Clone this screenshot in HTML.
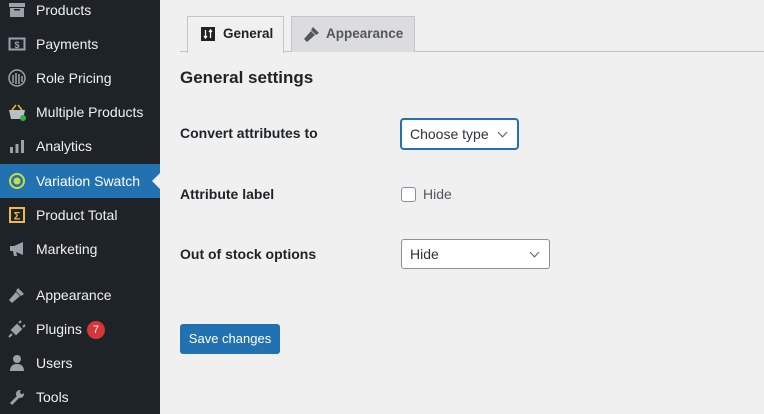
<!DOCTYPE html>
<html><head><style>
*{box-sizing:border-box;margin:0;padding:0}
body{width:764px;height:414px;overflow:hidden;background:#f0f0f1;font-family:"Liberation Sans",sans-serif;font-size:14px;color:#1d2327;position:relative}
#sb{position:absolute;left:0;top:0;width:160px;height:414px;background:#1d2327}
.mi{position:absolute;left:0;width:160px;height:34px;color:#f0f0f1;font-size:14px;line-height:34px;padding-left:36px}
.mi .ic{position:absolute;left:8px;top:8px;width:18px;height:18px}
.mi.cur{background:#2271b1;color:#fff}
.mi.cur:after{content:"";position:absolute;right:0;top:9px;border:8px solid transparent;border-right-color:#f0f0f1}
.badge{display:inline-block;background:#d63638;color:#fff;border-radius:9px;width:18px;height:18px;line-height:18px;text-align:center;font-size:11px;margin-left:5px;vertical-align:1px}
.tab{position:absolute;top:16px;height:36px;border:1px solid #c3c4c7;border-bottom:none;font-weight:bold;font-size:13.5px;line-height:34px;padding-left:40px}
.lbl{position:absolute;left:180px;font-weight:bold;font-size:14px}
.sel{position:absolute;left:401px;background:#fff;border:1px solid #8c8f94;border-radius:3px;height:30px;line-height:28px;padding-left:8px;font-size:14px;color:#2c3338}
.sel:after{content:"";position:absolute;right:11px;top:9px;width:6px;height:6px;border-right:1.6px solid #50575e;border-bottom:1.6px solid #50575e;transform:rotate(45deg)}
</style></head><body>
<div id="sb">
<div class="mi" style="top:-7px"><svg class="ic" viewBox="0 0 18 18"><rect x="1" y="2" width="16" height="4" fill="#9ca2a7"/><rect x="2" y="7" width="14" height="9" fill="#9ca2a7"/><rect x="6" y="8" width="6" height="1.5" fill="#1d2327"/></svg>Products</div>
<div class="mi" style="top:27px"><svg class="ic" viewBox="0 0 18 18"><rect x="1.5" y="3.5" width="15" height="11" fill="none" stroke="#9ca2a7" stroke-width="2"/><text x="9" y="13" font-size="9" fill="#9ca2a7" text-anchor="middle" font-weight="bold">$</text></svg>Payments</div>
<div class="mi" style="top:61px"><svg class="ic" viewBox="0 0 18 18"><circle cx="9" cy="9" r="8" fill="none" stroke="#9ca2a7" stroke-width="1.5"/><path d="M5 6v8M8 4v11M11 5v10M14 7v6" stroke="#9ca2a7" stroke-width="1.5"/></svg>Role Pricing</div>
<div class="mi" style="top:95px"><svg class="ic" viewBox="0 0 18 18"><path d="M4 7l4-5M14 7l-4-5" stroke="#e6c229" stroke-width="1.5"/><path d="M1 7h16l-2 9H3z" fill="#b8c0c4"/><circle cx="15" cy="15" r="3" fill="#2fb24a"/></svg>Multiple Products</div>
<div class="mi" style="top:129px"><svg class="ic" viewBox="0 0 18 18"><rect x="2" y="10" width="3" height="6" fill="#9ca2a7"/><rect x="7.5" y="7" width="3" height="9" fill="#9ca2a7"/><rect x="13" y="3" width="3" height="13" fill="#9ca2a7"/></svg>Analytics</div>
<div class="mi cur" style="top:164px"><svg class="ic" viewBox="0 0 18 18"><circle cx="9" cy="9" r="7" fill="none" stroke="#c5e03c" stroke-width="2"/><circle cx="9" cy="9" r="3.5" fill="#c5e03c"/></svg>Variation Swatch</div>
<div class="mi" style="top:198px"><svg class="ic" viewBox="0 0 18 18"><rect x="1" y="1" width="16" height="16" fill="#f0b849"/><rect x="3" y="3" width="12" height="12" fill="#1d2327"/><text x="9" y="13.5" font-size="11" fill="#f0b849" text-anchor="middle" font-weight="bold">Σ</text></svg>Product Total</div>
<div class="mi" style="top:232px"><svg class="ic" viewBox="0 0 18 18"><path d="M2 6h4l9-4v13l-9-4H2z" fill="#9ca2a7"/><path d="M5 11l1 5h3l-1-5" fill="#9ca2a7"/></svg>Marketing</div>
<div class="mi" style="top:278px"><svg class="ic" viewBox="0 0 18 18"><path d="M10 2l6 6-3 2-5-5z" fill="#9ca2a7"/><path d="M8 6l4 4-8 7-3-3z" fill="#9ca2a7"/></svg>Appearance</div>
<div class="mi" style="top:312px"><svg class="ic" viewBox="0 0 18 18"><path d="M9 5l4 4-5 5-4-4zM4 14l-3 3M11 3l2-2M15 7l2-2" stroke="#9ca2a7" stroke-width="2" fill="#9ca2a7"/></svg>Plugins<span class="badge">7</span></div>
<div class="mi" style="top:346px"><svg class="ic" viewBox="0 0 18 18"><circle cx="9" cy="5" r="4" fill="#9ca2a7"/><path d="M2 17c0-5 3-7 7-7s7 2 7 7z" fill="#9ca2a7"/></svg>Users</div>
<div class="mi" style="top:380px"><svg class="ic" viewBox="0 0 18 18"><path d="M3 16l7-7" stroke="#9ca2a7" stroke-width="3"/><circle cx="12" cy="6" r="4" fill="#9ca2a7"/><circle cx="14" cy="4" r="2" fill="#1d2327"/></svg>Tools</div>
</div>
<div style="position:absolute;left:180px;top:51px;width:584px;height:1px;background:#c3c4c7"></div>
<div class="tab" style="left:187px;width:97px;background:#f0f0f1;height:37px;color:#1d2327;padding-left:35px"><svg style="position:absolute;left:13px;top:10px" width="14" height="14" viewBox="0 0 14 14"><rect width="14" height="14" fill="#1d2327"/><path d="M4.5 3v8M3 9l1.5 2 1.5-2M9.5 11V3M8 5l1.5-2L11 5" stroke="#fff" stroke-width="1.3" fill="none"/></svg>General</div>
<div class="tab" style="left:291px;width:124px;background:#dcdcde;color:#50575e;padding-left:34px"><svg style="position:absolute;left:11px;top:8px" width="18" height="18" viewBox="0 0 18 18"><path d="M10 2l6 6-3 2-5-5z" fill="#50575e"/><path d="M8 6l4 4-8 7-3-3z" fill="#50575e"/></svg>Appearance</div>
<div style="position:absolute;left:180px;top:68px;font-size:17px;font-weight:bold">General settings</div>
<div class="lbl" style="top:125px">Convert attributes to</div>
<div class="lbl" style="top:186px">Attribute label</div>
<div class="lbl" style="top:246px">Out of stock options</div>
<div class="sel" style="top:119px;width:117px;border-color:#2271b1;box-shadow:0 0 0 1px #2271b1">Choose type</div>
<div style="position:absolute;left:401px;top:187px;width:15px;height:15px;border:1px solid #8c8f94;border-radius:3px;background:#fff"></div>
<div style="position:absolute;left:423px;top:186px;color:#50575e">Hide</div>
<div class="sel" style="top:239px;width:149px">Hide</div>
<div style="position:absolute;left:180px;top:324px;width:100px;height:30px;background:#2271b1;border-radius:3px;color:#fff;font-size:13px;line-height:30px;text-align:center">Save changes</div>
</body></html>
